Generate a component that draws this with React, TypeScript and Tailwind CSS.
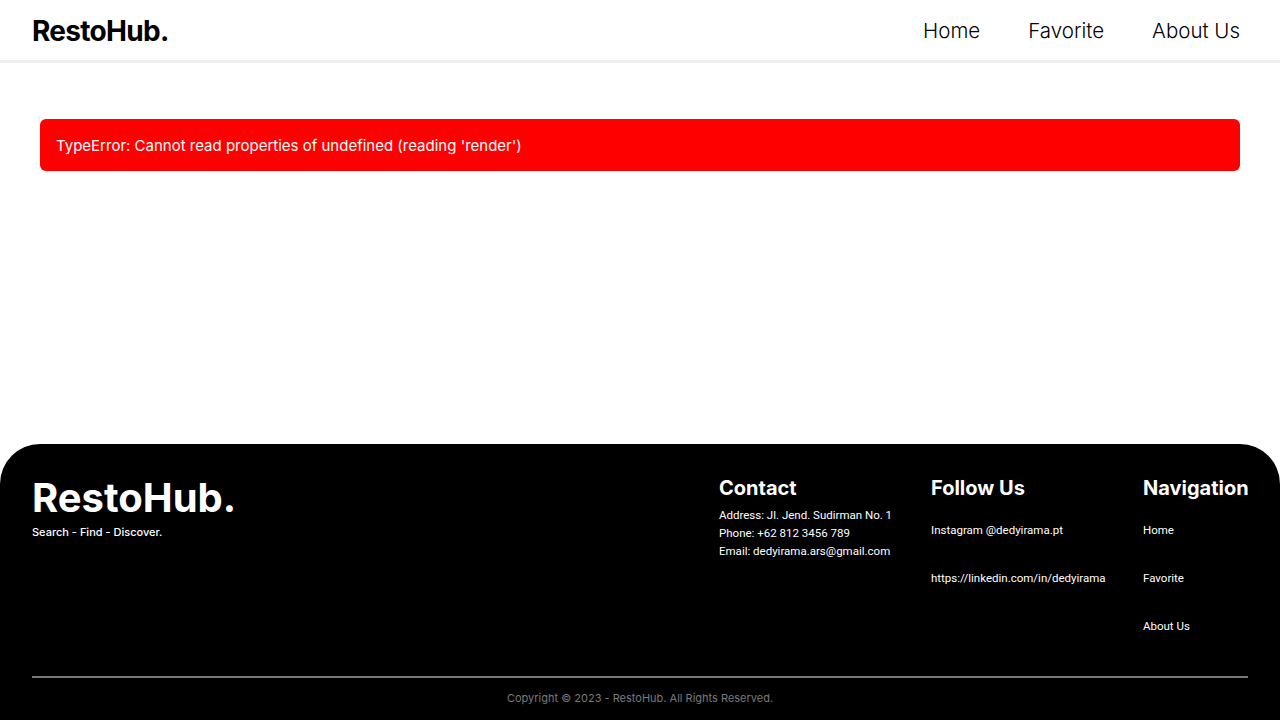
const navLinks = ["Home", "Favorite", "About Us"];

function Header() {
  return (
    <header className="flex h-[63px] items-center justify-between border-b-[3px] border-[#eeeeee] bg-white pl-8 pr-10 pt-[3px]">
      <a className="-mt-[2px] text-[28px] font-bold tracking-tight text-black">RestoHub.</a>
      <nav className="flex items-center gap-12">
        {navLinks.map((l) => (
          <a key={l} className="text-[20.5px] font-light text-black">
            {l}
          </a>
        ))}
      </nav>
    </header>
  );
}

function FooterCol({ title, children, className }: { title: string; children: React.ReactNode; className: string }) {
  return (
    <div className={className}>
      <h3 className="text-[20px] font-bold leading-[28px] text-white">{title}</h3>
      {children}
    </div>
  );
}

function Footer() {
  return (
    <footer className="rounded-t-[40px] bg-black px-8 pt-[30px]">
      <div className="flex h-[202px]">
        <div className="flex-1">
          <p className="text-[40px] font-bold leading-[48px] text-white">RestoHub.</p>
          <p className="mt-[2px] text-[11px] font-medium text-white">Search - Find - Discover.</p>
        </div>
        <FooterCol title="Contact" className="w-[212px]">
          <ul className="mt-[4px] flex flex-col font-['Roboto'] text-[11.5px] leading-[18px] text-white">
            <li>Address: Jl. Jend. Sudirman No. 1</li>
            <li>Phone: +62 812 3456 789</li>
            <li>Email: dedyirama.ars@gmail.com</li>
          </ul>
        </FooterCol>
        <FooterCol title="Follow Us" className="w-[212px]">
          <ul className="mt-[19px] flex flex-col gap-[30px] font-['Roboto'] text-[11.5px] leading-[18px] text-white">
            <li>Instagram @dedyirama.pt</li>
            <li>https://linkedin.com/in/dedyirama</li>
          </ul>
        </FooterCol>
        <FooterCol title="Navigation" className="w-[105px]">
          <ul className="mt-[19px] flex flex-col gap-[30px] font-['Roboto'] text-[11.5px] leading-[18px] text-white">
            {navLinks.map((l) => (
              <li key={l}>{l}</li>
            ))}
          </ul>
        </FooterCol>
      </div>
      <div className="border-t-2 border-[#777777]" />
      <p className="flex h-[42px] items-center justify-center pb-[2px] text-[11px] text-[#7a7a7a]">
        Copyright © 2023 - RestoHub. All Rights Reserved.
      </p>
    </footer>
  );
}

export default function App() {
  return (
    <div className="flex min-h-[720px] flex-col bg-white font-['Inter',sans-serif]">
      <Header />
      <main className="flex-1 px-10 pt-[56px]">
        <div className="flex h-[52px] items-center rounded-md bg-[#ff0000] px-4 pt-[2px] text-[15px] text-white">
          TypeError: Cannot read properties of undefined (reading 'render')
        </div>
      </main>
      <Footer />
    </div>
  );
}
